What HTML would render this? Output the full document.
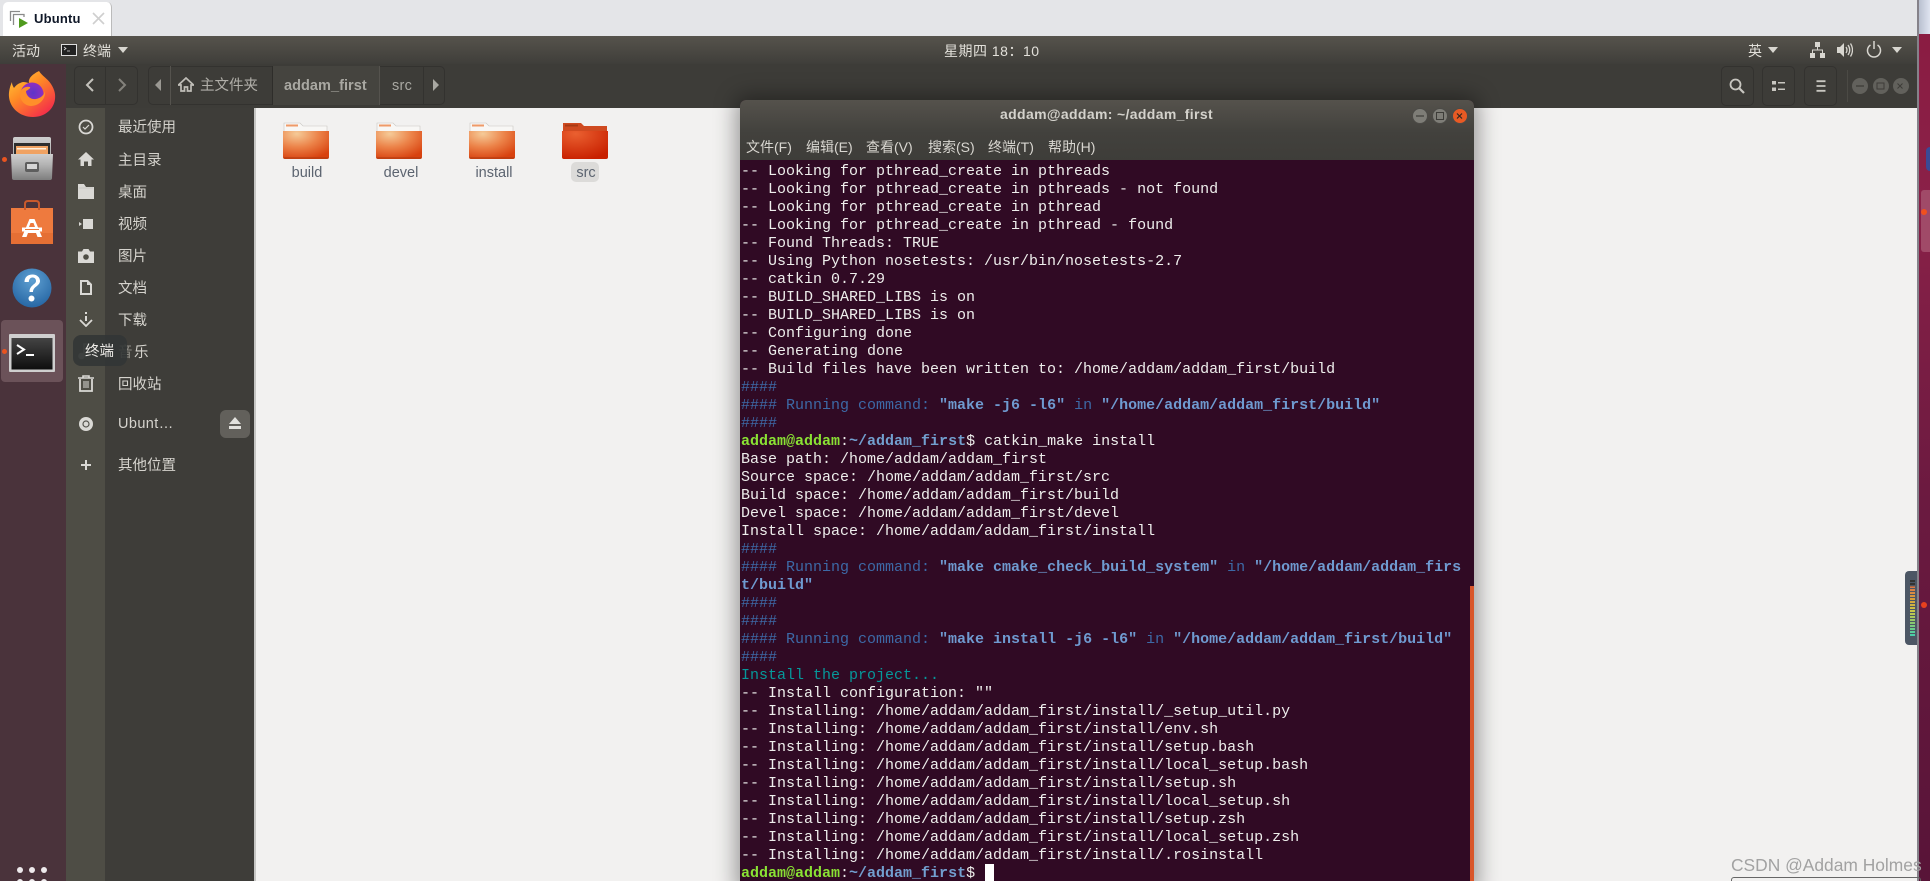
<!DOCTYPE html>
<html lang="zh">
<head>
<meta charset="utf-8">
<title>Ubuntu</title>
<style>
html,body{margin:0;padding:0;width:1930px;height:881px;overflow:hidden;background:#f2f1f0}
body{position:relative;font-family:"Liberation Sans","Noto Sans CJK SC",sans-serif}
div,span,svg{position:absolute}
pre span,.term span{position:static}
.s{white-space:nowrap;line-height:20px;font-size:14.5px;color:#d5d3cd;margin-top:1px}
.f{white-space:nowrap;line-height:20px;font-size:14.5px;color:#5c6470;text-align:center;width:90px;margin-top:1px;margin-left:1px}
.term{left:741px;top:163px;margin:0;position:absolute;font-family:"Liberation Mono","DejaVu Sans Mono",monospace;font-size:15px;line-height:18px;color:#eeeeec;white-space:pre}
.b{color:#3d69a6}.bb{color:#6f9ad0;font-weight:bold}.g{color:#8ae234;font-weight:bold}.l{color:#729fcf;font-weight:bold}.c{color:#06989a}
.m{white-space:nowrap;font-size:14px;line-height:20px;color:#d8d6d0;top:137px}
.d{width:6px;height:6px;border-radius:50%;background:#eeeaec}
</style>
</head>
<body>
<!-- browser tab strip -->
<div style="left:0;top:0;width:1917px;height:36px;background:#e4e5e8"></div>
<div style="left:3px;top:2px;width:108px;height:34px;background:#fff;border-radius:5px 5px 0 0;border-right:1px solid #bbb"></div>
<svg style="left:9px;top:9px" width="20" height="20" viewBox="0 0 20 20"><path d="M1.5 12V2.5H11" fill="none" stroke="#8a8a8a" stroke-width="1.3"/><path d="M4.5 16V5.5H15V8" fill="none" stroke="#8a8a8a" stroke-width="1.3"/><path d="M10 9l9 5-9 5z" fill="#4f9a1e"/></svg>
<span style="left:34px;top:10px;font-size:13px;font-weight:bold;line-height:18px;color:#101828;letter-spacing:.2px">Ubuntu</span>
<svg style="left:92px;top:12px" width="13" height="13" viewBox="0 0 13 13"><path d="M1 1l11 11M12 1L1 12" stroke="#cfcfcf" stroke-width="1.6"/></svg>

<!-- top panel -->
<div style="left:0;top:36px;width:1917px;height:28px;background:linear-gradient(#56534c,#3f3e3a)"></div>
<span class="s" style="left:12px;top:40px;font-size:14px;color:#e2e0da">活动</span>
<svg style="left:61px;top:44px" width="16" height="12" viewBox="0 0 16 12"><rect x=".5" y=".5" width="15" height="11" fill="#222" stroke="#ddd"/><path d="M3 3l2 1.5L3 6M6 7h3" stroke="#ddd" fill="none" stroke-width=".8"/></svg>
<span class="s" style="left:83px;top:40px;font-size:14px;color:#e2e0da">终端</span>
<svg style="left:118px;top:47px" width="10" height="6"><path d="M0 0h10L5 6z" fill="#d8d6d0"/></svg>
<span class="s" style="left:944px;top:40px;font-size:14px;color:#e2e0da;letter-spacing:.5px">星期四 18：10</span>
<span class="s" style="left:1748px;top:40px;font-size:14px;color:#e2e0da">英</span>
<svg style="left:1768px;top:47px" width="10" height="6"><path d="M0 0h10L5 6z" fill="#d8d6d0"/></svg>
<svg style="left:1810px;top:42px" width="15" height="16" viewBox="0 0 15 16"><path d="M5 0h5v5H5zM0 11h5v5H0zM10 11h5v5h-5z" fill="#d8d6d0"/><path d="M7.5 5v3M2.5 11V8h10v3" stroke="#d8d6d0" fill="none"/></svg>
<svg style="left:1837px;top:42px" width="16" height="16" viewBox="0 0 16 16"><path d="M0 5h3l4-4v14l-4-4H0z" fill="#d8d6d0"/><path d="M9 5q2 3 0 6M11 3q3.500 5 0 10M13.500 1.500q4 6.500 0 13" stroke="#d8d6d0" fill="none" stroke-width="1.300"/></svg>
<svg style="left:1866px;top:41px" width="16" height="17" viewBox="0 0 16 17"><path d="M4.500 4a6.500 6.500 0 1 0 7 0" stroke="#d8d6d0" fill="none" stroke-width="1.500"/><path d="M8 0v8" stroke="#d8d6d0" stroke-width="1.500"/></svg>
<svg style="left:1892px;top:47px" width="10" height="6"><path d="M0 0h10L5 6z" fill="#d8d6d0"/></svg>

<!-- file manager header -->
<div style="left:66px;top:64px;width:1851px;height:44px;background:#3d3c38"></div>
<div style="left:74px;top:66px;width:64px;height:39px;border:1px solid #33322f;border-radius:5px;box-sizing:border-box"></div>
<div style="left:105px;top:66px;width:1px;height:39px;background:#33322f"></div>
<svg style="left:85px;top:77px" width="10" height="16" viewBox="0 0 10 16"><path d="M8 2L2 8l6 6" stroke="#c4c2bc" fill="none" stroke-width="2"/></svg>
<svg style="left:117px;top:77px" width="10" height="16" viewBox="0 0 10 16"><path d="M2 2l6 6-6 6" stroke="#84827c" fill="none" stroke-width="2"/></svg>
<div style="left:148px;top:66px;width:297px;height:39px;border:1px solid #33322f;border-radius:5px;box-sizing:border-box"></div>
<svg style="left:155px;top:79px" width="6" height="12"><path d="M6 0v12L0 6z" fill="#9a9892"/></svg>
<div style="left:170px;top:66px;width:1px;height:39px;background:#55534e"></div>
<svg style="left:178px;top:77px" width="16" height="15" viewBox="0 0 16 15"><path d="M8 1L0.500 8H3v6h3.500v-4h3v4H13V8h2.500z" fill="none" stroke="#c0beb8" stroke-width="1.700"/></svg>
<span class="s" style="left:200px;top:75px;color:#b0aea8">主文件夹</span>
<div style="left:272px;top:66px;width:108px;height:39px;background:#45443f;border-left:1px solid #2e2d2a;border-right:1px solid #55534e;box-sizing:border-box"></div>
<span class="s" style="left:284px;top:75px;color:#a9a8a2;font-weight:bold;letter-spacing:.05px">addam_first</span>
<span class="s" style="left:392px;top:75px;color:#a9a8a2;letter-spacing:.3px">src</span>
<div style="left:423px;top:66px;width:1px;height:39px;background:#33322f"></div>
<svg style="left:433px;top:79px" width="6" height="12"><path d="M0 0v12L6 6z" fill="#a9a8a2"/></svg>

<div style="left:1721px;top:66px;width:33px;height:40px;border:1px solid #33322f;border-radius:5px;box-sizing:border-box"></div>
<div style="left:1762px;top:66px;width:33px;height:40px;border:1px solid #33322f;border-radius:5px;box-sizing:border-box"></div>
<div style="left:1804px;top:66px;width:33px;height:40px;border:1px solid #33322f;border-radius:5px;box-sizing:border-box"></div>
<svg style="left:1729px;top:78px" width="16" height="16" viewBox="0 0 16 16"><circle cx="6.500" cy="6.500" r="5" fill="none" stroke="#c8c6c0" stroke-width="1.800"/><path d="M10 10l5 5" stroke="#c8c6c0" stroke-width="2.200"/></svg>
<svg style="left:1772px;top:80px" width="14" height="12" viewBox="0 0 14 12"><path d="M0 1h4v3.500H0zM0 7.500h4V11H0zM6 2h7v1.500H6zM6 8.500h7V10H6z" fill="#c8c6c0"/></svg>
<svg style="left:1815px;top:80px" width="12" height="12" viewBox="0 0 12 12"><path d="M1.500 1.200h9M1.500 6h9M1.500 10.800h9" stroke="#c8c6c0" stroke-width="1.800" fill="none"/></svg>
<div style="left:1847px;top:70px;width:1px;height:32px;background:#4b4a45"></div>
<div style="left:1852px;top:78px;width:16px;height:16px;border-radius:50%;background:#62615c"></div>
<div style="left:1873px;top:78px;width:16px;height:16px;border-radius:50%;background:#62615c"></div>
<div style="left:1893px;top:78px;width:16px;height:16px;border-radius:50%;background:#62615c"></div>
<svg style="left:1852px;top:78px" width="57" height="16"><path d="M4 8h8" stroke="#3d3c38" stroke-width="1.300"/><rect x="25" y="5" width="7" height="6" fill="none" stroke="#3d3c38"/><path d="M45.500 5.500l5 5M50.500 5.500l-5 5" stroke="#3d3c38"/></svg>

<!-- dock -->
<div style="left:0;top:64px;width:66px;height:817px;background:#4a333b"></div>
<!-- firefox -->
<svg style="left:8px;top:70px" width="48" height="48" viewBox="0 0 48 48">
<defs>
<linearGradient id="ff" x1="0" y1="0" x2=".8" y2="1"><stop offset="0" stop-color="#ffd03a"/><stop offset=".45" stop-color="#ff8a25"/><stop offset="1" stop-color="#f3274c"/></linearGradient>
<radialGradient id="fp" cx=".55" cy=".45" r=".6"><stop offset="0" stop-color="#5d35c8"/><stop offset="1" stop-color="#a02cbc"/></radialGradient>
</defs>
<path d="M31 1c3 5 8 7 12 13 4 6 4.500 11 4 15-1 10-10 18-22 18C12 47 2 38 1 27c-.5-5 1-11 3-15 0 3 1 4 2 6 2-3 5-5 9-6 3 0 5 1 6 1-1-5 4-9 10-12z" fill="url(#ff)"/>
<circle cx="24" cy="24" r="11.500" fill="url(#fp)"/>
<path d="M12 22c2-4 6-6 10-5 1 1-2 3-4 4 0 5 5 9 10 8 5-1 8-4 9-8 1 8-6 15-14 15-7 0-12-7-11-14z" fill="#ff8f2a"/>
</svg>
<!-- files -->
<svg style="left:10px;top:136px" width="44" height="45" viewBox="0 0 44 45">
<defs><linearGradient id="cab" x1="0" y1="0" x2="0" y2="1"><stop offset="0" stop-color="#cfcfcf"/><stop offset=".4" stop-color="#b4b4b4"/><stop offset="1" stop-color="#7e7e7e"/></linearGradient></defs>
<path d="M3 3q0-2 2-2h34q2 0 2 2v38q0 3-3 3H6q-3 0-3-3z" fill="url(#cab)"/>
<rect x="4" y="7" width="36" height="11" fill="#2e2e2e"/>
<rect x="6" y="10" width="32" height="8" fill="#f0a262"/>
<rect x="7" y="12" width="29" height="1.500" fill="#fff0dc"/>
<path d="M1 18h42l-1 24q0 2-2 2H4q-2 0-2-2z" fill="url(#cab)"/>
<rect x="15" y="26" width="14" height="10" rx="2" fill="#5e5e5e"/><rect x="17" y="28" width="10" height="5" fill="#d6d6d6"/>
</svg>
<div style="left:2px;top:157px;width:5px;height:5px;border-radius:50%;background:#e95420"></div>
<!-- store -->
<svg style="left:10px;top:200px" width="44" height="45" viewBox="0 0 44 45">
<path d="M1 8h42v36H1z" fill="#ee7a3e"/><path d="M1 33h42v11H1z" fill="#e56f34"/>
<path d="M15 10V4q0-3 3-3h8q3 0 3 3v6" fill="none" stroke="#c9592c" stroke-width="2"/>
<path d="M19.500 19h5L32 37h-4.500l-1.500-4h-8l-1.500 4H12z" fill="#fff"/><path d="M12 27.500h20v4H12z" fill="#fff"/><path d="M15 29h14v1H15zM20.500 23h3l1.500 4h-6z" fill="#ee7a3e"/>
</svg>
<!-- help -->
<svg style="left:12px;top:268px" width="40" height="40" viewBox="0 0 40 40">
<defs><radialGradient id="hp" cx=".5" cy=".3" r=".8"><stop offset="0" stop-color="#5fa0d2"/><stop offset="1" stop-color="#1f5f9e"/></radialGradient></defs>
<circle cx="20" cy="20" r="19.500" fill="url(#hp)"/>
<path d="M12.500 14c0-5 3.500-7.500 8-7.500 4.500 0 7.500 3 7.500 6.500 0 5-7 5.500-7 11h-3.500c0-7 6.500-7.500 6.500-11 0-2-1.300-3.500-3.500-3.500-2.300 0-3.500 1.800-3.700 4.500z" fill="#fff"/><circle cx="19.500" cy="30.500" r="3" fill="#fff"/>
</svg>
<!-- terminal -->
<div style="left:1px;top:320px;width:62px;height:62px;background:#6b5259;border-radius:4px"></div>
<div style="left:2px;top:349px;width:5px;height:5px;border-radius:50%;background:#e95420"></div>
<svg style="left:9px;top:334px" width="46" height="39" viewBox="0 0 46 39">
<defs><linearGradient id="tb" x1="0" y1="0" x2="0" y2="1"><stop offset="0" stop-color="#444"/><stop offset="1" stop-color="#0e0e0e"/></linearGradient></defs>
<rect x="0" y="0" width="46" height="38" rx="1" fill="#cfcfcf"/>
<rect x="2.500" y="4" width="41" height="31.500" fill="url(#tb)"/>
<path d="M8 11l7 4.500L8 20" stroke="#fff" fill="none" stroke-width="2"/><path d="M17 21h8" stroke="#fff" stroke-width="2"/>
</svg>
<div class="d" style="left:17px;top:867px"></div><div class="d" style="left:29px;top:867px"></div><div class="d" style="left:41px;top:867px"></div>
<div class="d" style="left:17px;top:879px"></div><div class="d" style="left:29px;top:879px"></div><div class="d" style="left:41px;top:879px"></div>

<!-- sidebar -->
<div style="left:66px;top:108px;width:39px;height:773px;background:#4e4d45"></div>
<div style="left:105px;top:108px;width:149px;height:773px;background:#3e3d39"></div>
<div style="left:254px;top:108px;width:2px;height:773px;background:#c6c6c4"></div>

<svg style="left:78px;top:119px" width="16" height="16" viewBox="0 0 16 16"><circle cx="8" cy="8" r="6.500" fill="none" stroke="#dad9d5" stroke-width="1.800"/><path d="M5 8l2 2 4-4" stroke="#dad9d5" fill="none" stroke-width="1.200"/></svg>
<svg style="left:78px;top:151px" width="16" height="16" viewBox="0 0 16 16"><path d="M8 1L0 8.500h2.500V15H6v-4.500h4V15h3.500V8.500H16z" fill="#dad9d5"/></svg>
<svg style="left:78px;top:184px" width="16" height="15" viewBox="0 0 16 15"><path d="M0 0h6l2 3h8v12H0z" fill="#dad9d5"/><path d="M1 4h14" stroke="#3e3d39" stroke-width=".1"/></svg>
<svg style="left:79px;top:219px" width="14" height="10" viewBox="0 0 14 10"><path d="M4 0h10v10H4zM0 3l3 2-3 2z" fill="#dad9d5"/></svg>
<svg style="left:78px;top:249px" width="16" height="14" viewBox="0 0 16 14"><path d="M0 2.500h4L5.500 0h5L12 2.500h4V14H0z" fill="#dad9d5"/><circle cx="8" cy="8" r="2.800" fill="#4e4d45"/></svg>
<svg style="left:80px;top:280px" width="12" height="15" viewBox="0 0 12 15"><path d="M1 1h6.500L11 4.500V14H1z" fill="none" stroke="#dad9d5" stroke-width="2"/><path d="M7 1v4h4" fill="#dad9d5"/></svg>
<svg style="left:79px;top:312px" width="14" height="15" viewBox="0 0 14 15"><path d="M7 0v2M7 4v5" stroke="#dad9d5" stroke-width="2"/><path d="M1 8l6 6 6-6" stroke="#dad9d5" fill="none" stroke-width="1.800"/></svg>
<svg style="left:78px;top:343px" width="14" height="17" viewBox="0 0 14 17"><circle cx="3.500" cy="13" r="3.300" fill="#8e8d87"/><path d="M6 13V1l7 0" stroke="#8e8d87" fill="none" stroke-width="1.500"/></svg>
<svg style="left:78px;top:375px" width="16" height="17" viewBox="0 0 16 17"><path d="M0 3h16M5 3V1h6v2" stroke="#dad9d5" stroke-width="1.600" fill="none"/><path d="M2 4v12h12V4" stroke="#dad9d5" stroke-width="1.800" fill="none"/><path d="M6 6v7M8 6v7M10 6v7" stroke="#dad9d5"/></svg>
<svg style="left:79px;top:417px" width="14" height="14" viewBox="0 0 14 14"><circle cx="7" cy="7" r="7" fill="#dad9d5"/><circle cx="7" cy="7" r="3" fill="none" stroke="#55544e" stroke-width="1.200"/></svg>
<svg style="left:81px;top:460px" width="10" height="10"><path d="M5 0v10M0 5h10" stroke="#dad9d5" stroke-width="2"/></svg>

<span class="s" style="left:118px;top:117px">最近使用</span>
<span class="s" style="left:118px;top:150px">主目录</span>
<span class="s" style="left:118px;top:182px">桌面</span>
<span class="s" style="left:118px;top:214px">视频</span>
<span class="s" style="left:118px;top:246px">图片</span>
<span class="s" style="left:118px;top:278px">文档</span>
<span class="s" style="left:118px;top:310px">下载</span>
<span class="s" style="left:134px;top:342px">乐</span>
<span class="s" style="left:118px;top:374px">回收站</span>
<span class="s" style="left:118px;top:413px;letter-spacing:.4px">Ubunt…</span>
<span class="s" style="left:118px;top:455px">其他位置</span>
<div style="left:220px;top:410px;width:30px;height:28px;border-radius:6px;background:#62605b"></div>
<svg style="left:229px;top:417px" width="12" height="13" viewBox="0 0 12 13"><path d="M6 0l6 7H0zM0 9h12v3H0z" fill="#e2e1dd"/></svg>
<!-- tooltip -->
<span class="s" style="left:118px;top:342px;color:#8e8d87">音</span>
<div style="left:73px;top:335px;width:54px;height:31px;border-radius:8px;background:rgba(50,54,54,.88)"></div>
<span class="s" style="left:85px;top:341px;color:#eceae6">终端</span>

<!-- content folders -->
<svg width="0" height="0"><defs>
<radialGradient id="fo" cx=".3" cy=".1" r=".95"><stop offset="0" stop-color="#f5cb98"/><stop offset=".5" stop-color="#ec8349"/><stop offset="1" stop-color="#d8420f"/></radialGradient>
<radialGradient id="fr" cx=".3" cy=".1" r=".95"><stop offset="0" stop-color="#ea6030"/><stop offset="1" stop-color="#c82000"/></radialGradient>
<g id="fd"><path d="M1 9V1h16l3 3h24v6H1z" fill="#f8f7f5" stroke="#c8c6c2" stroke-width=".6"/><rect x="3" y="2.500" width="12" height="2" fill="#ef9a68"/><path d="M0 9h46v26q0 2-2 2H2q-2 0-2-2z" fill="url(#fo)"/><path d="M.5 36h45" stroke="#a83810" stroke-width="1"/></g>
</defs></svg>
<svg style="left:283px;top:122px" width="46" height="38" viewBox="0 0 46 38"><use href="#fd"/></svg>
<svg style="left:376px;top:122px" width="46" height="38" viewBox="0 0 46 38"><use href="#fd"/></svg>
<svg style="left:469px;top:122px" width="46" height="38" viewBox="0 0 46 38"><use href="#fd"/></svg>
<svg style="left:562px;top:122px" width="46" height="38" viewBox="0 0 46 38"><path d="M1 9V1h18l3 3h23v6H1z" fill="#cf4a20"/><rect x="3" y="2.500" width="13" height="2" fill="#a83a14"/><path d="M0 9h46v26q0 2-2 2H2q-2 0-2-2z" fill="url(#fr)"/></svg>
<div style="left:571px;top:162px;width:28px;height:20px;background:#dcdbd9;border-radius:5px"></div>
<span class="f" style="left:261px;top:162px">build</span>
<span class="f" style="left:355px;top:162px">devel</span>
<span class="f" style="left:448px;top:162px">install</span>
<span class="f" style="left:540px;top:162px">src</span>

<!-- right edge -->
<div style="left:1917px;top:0;width:2px;height:881px;background:#85828a"></div>
<div style="left:1919px;top:0;width:11px;height:34px;background:linear-gradient(90deg,#b9c0d0,#dfe4f0)"></div>
<div style="left:1919px;top:34px;width:11px;height:847px;background:linear-gradient(#8a1c42 0,#8a2148 20%,#6b1a40 55%,#581438 100%)"></div>
<div style="left:1921px;top:190px;width:9px;height:62px;background:#a04a68;border-radius:3px 0 0 3px"></div>
<div style="left:1926px;top:147px;width:4px;height:24px;background:#3a4a96;border-radius:12px 0 0 12px"></div>
<div style="left:1921px;top:209px;width:6px;height:6px;border-radius:50%;background:#f0501e"></div>
<div style="left:1921px;top:602px;width:6px;height:6px;border-radius:50%;background:#e8401e"></div>
<div style="left:1905px;top:571px;width:12px;height:74px;background:#4c5664;border-radius:4px 0 0 4px"></div>
<div style="left:1910px;top:580px;width:5px;height:57px;background:repeating-linear-gradient(#0000 0,#0000 2px,#4c5664 2px,#4c5664 3px),linear-gradient(#333 0,#333 10%,#d9784a 12%,#d6a23a 35%,#c8c84a 55%,#8ac870 75%,#40d0b0 100%)"></div>

<!-- CSDN watermark -->
<span style="left:1731px;top:855px;font-size:17.400px;line-height:20px;color:#a2a2a2;white-space:nowrap">CSDN @Addam Holmes</span>
<div style="left:1731px;top:877px;width:190px;height:10px;border:1px solid #666;border-radius:3px;box-sizing:border-box"></div>

<!-- terminal window -->
<div style="left:740px;top:100px;width:734px;height:790px;border-radius:6px 6px 0 0;background:#300a24;box-shadow:0 0 22px 4px rgba(0,0,0,.38);overflow:hidden">
<div style="left:0;top:0;width:734px;height:60px;background:linear-gradient(#55524c 0,#42413d 55%,#3e3d39 100%)"></div>
</div>
<span style="left:1000px;top:104px;font-size:14px;font-weight:bold;line-height:20px;color:#d4d2cc;letter-spacing:.35px;white-space:nowrap">addam@addam: ~/addam_first</span>
<div style="left:1412px;top:108px;width:16px;height:16px;border-radius:50%;background:#7e7d77;border:1px solid #4c4b47;box-sizing:border-box"></div>
<div style="left:1432px;top:108px;width:16px;height:16px;border-radius:50%;background:#7e7d77;border:1px solid #4c4b47;box-sizing:border-box"></div>
<div style="left:1452px;top:108px;width:16px;height:16px;border-radius:50%;background:#e95a24;border:1px solid #4c4b47;box-sizing:border-box"></div>
<svg style="left:1412px;top:108px" width="56" height="16"><path d="M4 8h8" stroke="#3d3c38" stroke-width="1.200"/><rect x="24.500" y="4.500" width="7" height="7" fill="none" stroke="#3d3c38"/><path d="M45 5.500l5 5M50 5.500l-5 5" stroke="#33261f" stroke-width="1.200"/></svg>
<span class="m" style="left:746px">文件(F)</span>
<span class="m" style="left:806px">编辑(E)</span>
<span class="m" style="left:866px">查看(V)</span>
<span class="m" style="left:928px">搜索(S)</span>
<span class="m" style="left:988px">终端(T)</span>
<span class="m" style="left:1048px">帮助(H)</span>
<pre class="term">-- Looking for pthread_create in pthreads
-- Looking for pthread_create in pthreads - not found
-- Looking for pthread_create in pthread
-- Looking for pthread_create in pthread - found
-- Found Threads: TRUE
-- Using Python nosetests: /usr/bin/nosetests-2.7
-- catkin 0.7.29
-- BUILD_SHARED_LIBS is on
-- BUILD_SHARED_LIBS is on
-- Configuring done
-- Generating done
-- Build files have been written to: /home/addam/addam_first/build
<span class="b">####</span>
<span class="b">#### Running command: </span><span class="bb">"make -j6 -l6"</span><span class="b"> in </span><span class="bb">"/home/addam/addam_first/build"</span>
<span class="b">####</span>
<span class="g">addam@addam</span>:<span class="l">~/addam_first</span>$ catkin_make install
Base path: /home/addam/addam_first
Source space: /home/addam/addam_first/src
Build space: /home/addam/addam_first/build
Devel space: /home/addam/addam_first/devel
Install space: /home/addam/addam_first/install
<span class="b">####</span>
<span class="b">#### Running command: </span><span class="bb">"make cmake_check_build_system"</span><span class="b"> in </span><span class="bb">"/home/addam/addam_firs
t/build"</span>
<span class="b">####</span>
<span class="b">####</span>
<span class="b">#### Running command: </span><span class="bb">"make install -j6 -l6"</span><span class="b"> in </span><span class="bb">"/home/addam/addam_first/build"</span>
<span class="b">####</span>
<span class="c">Install the project...</span>
-- Install configuration: ""
-- Installing: /home/addam/addam_first/install/_setup_util.py
-- Installing: /home/addam/addam_first/install/env.sh
-- Installing: /home/addam/addam_first/install/setup.bash
-- Installing: /home/addam/addam_first/install/local_setup.bash
-- Installing: /home/addam/addam_first/install/setup.sh
-- Installing: /home/addam/addam_first/install/local_setup.sh
-- Installing: /home/addam/addam_first/install/setup.zsh
-- Installing: /home/addam/addam_first/install/local_setup.zsh
-- Installing: /home/addam/addam_first/install/.rosinstall
<span class="g">addam@addam</span>:<span class="l">~/addam_first</span>$ </pre>
<div style="left:985px;top:864px;width:9px;height:17px;background:#fff"></div>
<div style="left:1470px;top:586px;width:4px;height:295px;background:#d9562a"></div>
</body>
</html>
